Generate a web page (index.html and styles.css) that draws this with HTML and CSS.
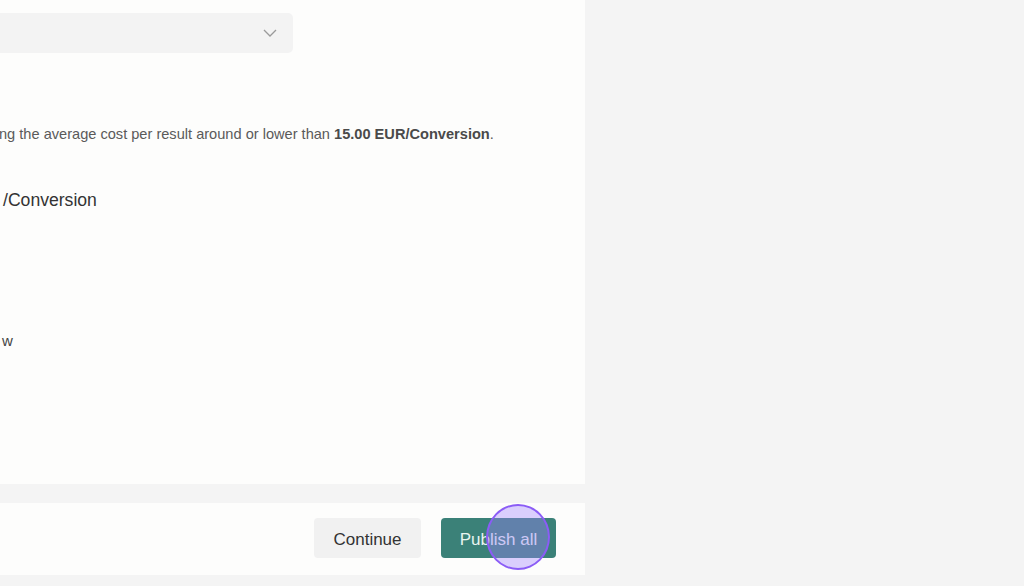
FILE: index.html
```html
<!DOCTYPE html>
<html>
<head>
<meta charset="utf-8">
<link rel="stylesheet" href="styles.css">
</head>
<body>
<div class="page">
  <div class="main">
    <div class="content">
      <div class="select">
        <svg class="chev" width="14" height="8" viewBox="0 0 14 8"><path d="M1 1 L7 7 L13 1" fill="none" stroke="#9a9a9a" stroke-width="1.3"/></svg>
      </div>
      <p class="hint">ng the average cost per result around or lower than <b>15.00 EUR/Conversion</b>.</p>
      <p class="value">/Conversion</p>
      <p class="small">w</p>
    </div>
    <div class="strip"></div>
    <div class="footer">
      <button class="btn btn-light">Continue</button>
      <div class="pub-wrap">
        <button class="btn btn-primary">Publish all</button>
        <span class="cursor"></span>
      </div>
    </div>
  </div>
  <div class="side"></div>
</div>
</body>
</html>
```

FILE: styles.css
```css
body {
	margin: 0;
	background: #fdfdfc;
	font-family: "Liberation Sans", Arial, sans-serif;
}

.page {
	display: flex;
	height: 586px;
	overflow: hidden;
}

.main {
	width: 585px;
	display: flex;
	flex-direction: column;
	background: #f4f4f4;
}

.content {
	height: 484px;
	background: #fdfdfc;
	padding-top: 13px;
	box-sizing: border-box;
}

.select {
	width: 293px;
	height: 40px;
	background: #f3f3f3;
	border-radius: 0 5px 5px 0;
	display: flex;
	align-items: center;
	justify-content: flex-end;
	padding-right: 16px;
	box-sizing: border-box;
}

.hint {
	margin: 73px 0 0 -1px;
	font-size: 14.6px;
	color: #5a5a5a;
}

.hint b {
	color: #4a4a4a;
}

.value {
	margin: 48px 0 0 3px;
	font-size: 17.6px;
	color: #333;
}

.small {
	margin: 121px 0 0 2px;
	font-size: 15px;
	color: #444;
}

.strip {
	height: 19px;
	margin-left: 3px;
}

.footer {
	height: 72px;
	background: #fdfdfc;
	display: flex;
	justify-content: flex-end;
	align-items: center;
	gap: 20px;
	padding-right: 29px;
	padding-bottom: 2px;
	box-sizing: border-box;
}

.btn {
	height: 40px;
	border: none;
	border-radius: 4px;
	font-family: inherit;
	font-size: 17px;
	padding: 3px 0 0;
}

.btn-light {
	background: #f1f1f1;
	color: #333;
	width: 107px;
}

.btn-primary {
	background: #3b8178;
	color: #e8f4f0;
	width: 115px;
}

.pub-wrap {
	position: relative;
}

.cursor {
	position: absolute;
	left: 45px;
	top: -14px;
	width: 60px;
	height: 62px;
	border: 2px solid #8b5cf6;
	border-radius: 50%;
	background: rgba(160, 130, 255, 0.38);
}

.side {
	flex: 1;
	background: #f4f4f4;
}
```
